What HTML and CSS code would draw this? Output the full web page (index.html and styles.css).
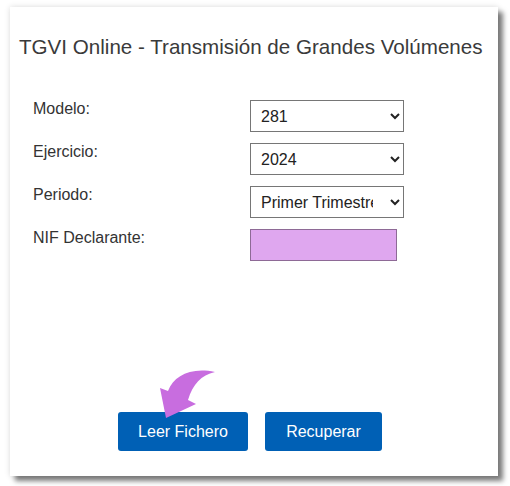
FILE: index.html
```html
<!DOCTYPE html>
<html lang="es">
<head>
<meta charset="utf-8">
<title>TGVI Online</title>
<link rel="stylesheet" href="styles.css">
</head>
<body>
<div class="card">
  <h1 class="title">TGVI Online - Transmisión de Grandes Volúmenes</h1>
  <div class="form">
    <label class="lbl" for="modelo">Modelo:</label>
    <select id="modelo" class="sel"><option>281</option></select>
    <label class="lbl" for="ejercicio">Ejercicio:</label>
    <select id="ejercicio" class="sel"><option>2024</option></select>
    <label class="lbl" for="periodo">Periodo:</label>
    <select id="periodo" class="sel"><option>Primer Trimestre</option></select>
    <label class="lbl" for="nif">NIF Declarante:</label>
    <input id="nif" class="nif" type="text">
  </div>
  <div class="actions">
    <button class="btn">Leer Fichero</button>
    <button class="btn">Recuperar</button>
    <svg class="arrow" width="75" height="60" viewBox="0 0 75 60" aria-hidden="true">
      <path d="M18 29 C24 14 40 5 65 10 C51 13 43 22 38 38 L46 42 L16 56 L10 26 Z" fill="#c86ddf"/>
    </svg>
  </div>
</div>
</body>
</html>
```

FILE: styles.css
```css
html, body {
  margin: 0;
  padding: 0;
  background: #ffffff;
}
body {
  font-family: "Liberation Sans", Arial, sans-serif;
  color: #333333;
  height: 486px;
  overflow: hidden;
}
.card {
  position: relative;
  margin: 7px 0 0 10px;
  width: 488px;
  height: 469px;
  box-sizing: border-box;
  background: #ffffff;
  box-shadow: 0 0 6px rgba(0,0,0,0.14), 5px 5px 5px rgba(0,0,0,0.5);
  display: flex;
  flex-direction: column;
  padding: 28px 0 25px 0;
}
.title {
  margin: 0 0 0 9px;
  font-size: 20.6px;
  font-weight: normal;
  line-height: 23px;
  color: #3a3a3a;
}
.form {
  margin-top: 42px;
  padding-left: 23px;
  display: grid;
  grid-template-columns: 217px auto;
  row-gap: 11px;
  align-items: start;
}
.lbl {
  font-size: 16px;
  line-height: 18px;
  color: #333333;
}
.sel {
  width: 154px;
  height: 32px;
  font-family: "Liberation Sans", Arial, sans-serif;
  font-size: 16px;
  color: #222222;
  background: #ffffff;
  border: 1px solid #767676;
  border-radius: 0;
  padding: 0 14px 0 6px;
  justify-self: start;
}
.nif {
  width: 147px;
  height: 32px;
  box-sizing: border-box;
  background: #dfa7ef;
  border: 1px solid #8e6a96;
  border-radius: 0;
  justify-self: start;
}
.actions {
  position: relative;
  margin-top: auto;
  display: flex;
  justify-content: center;
  gap: 17px;
  padding-right: 8px;
}
.btn {
  height: 39px;
  padding: 0 18px;
  background: #0060b5;
  color: #ffffff;
  border: none;
  border-radius: 3px;
  font-family: "Liberation Sans", Arial, sans-serif;
  font-size: 16px;
}
.btn:first-child {
  width: 130px;
}
.btn:nth-child(2) {
  width: 117px;
}
.arrow {
  position: absolute;
  left: 140px;
  top: -50px;
}
```
